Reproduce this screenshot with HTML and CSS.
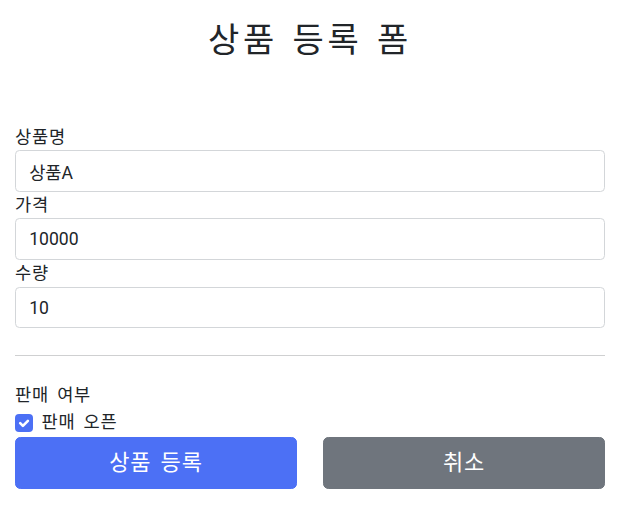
FILE: index.html
```html
<!DOCTYPE html>
<html lang="ko">
<head>
<meta charset="utf-8">
<title>상품 등록 폼</title>
<link rel="stylesheet" href="styles.css">
</head>
<body>
<div class="container">
  <div class="header">
    <h2 class="title">상품 등록 폼</h2>
  </div>
  <form class="form" onsubmit="return false">
    <div class="field">
      <label class="label ko" for="itemName">상품명</label>
      <input class="control" id="itemName" type="text" value="상품A">
    </div>
    <div class="field">
      <label class="label ko" for="price">가격</label>
      <input class="control" id="price" type="text" value="10000">
    </div>
    <div class="field">
      <label class="label ko" for="quantity">수량</label>
      <input class="control" id="quantity" type="text" value="10">
    </div>
    <hr class="divider">
    <div class="group-title ko">판매 여부</div>
    <div class="check">
      <span class="check-box">
        <svg width="18" height="18" viewBox="0 0 18 18"><rect x="0" y="0" width="18" height="18" rx="4" fill="#4c70f5"/><path d="M5.2 9.2l2.7 2.7 5-5" fill="none" stroke="#fff" stroke-width="2.6" stroke-linecap="round" stroke-linejoin="round"/></svg>
      </span>
      <label class="check-label ko">판매 오픈</label>
    </div>
    <div class="actions">
      <button class="btn btn-primary ko" type="submit">상품 등록</button>
      <button class="btn btn-secondary ko" type="button">취소</button>
    </div>
  </form>
</div>
</body>
</html>
```
FILE: styles.css
```css
html, body {
  margin: 0;
  padding: 0;
  background: #fff;
}
body {
  font-family: Roboto, "Noto Sans CJK KR", sans-serif;
  font-size: 17.6px;
  line-height: 1.5;
  color: #212529;
}
.ko {
  letter-spacing: 0.8px;
  word-spacing: 3px;
}
.container {
  width: 590px;
  padding: 0 15px;
}
.header {
  padding-top: 20px;
  padding-bottom: 63px;
  text-align: center;
}
.title {
  margin: 0;
  font-size: 34px;
  font-weight: 400;
  line-height: 1.2;
  letter-spacing: 3.5px;
  word-spacing: 3px;
}
.form {
  margin: 0;
}
.field {
  display: flex;
  flex-direction: column;
}
.label {
  display: block;
  line-height: 26.4px;
}
.control {
  display: block;
  box-sizing: border-box;
  width: 100%;
  height: 41.8px;
  margin: 0;
  padding: 6.6px 13.2px;
  font: inherit;
  line-height: 26.4px;
  color: #212529;
  background: #fff;
  border: 1px solid #d3d6d9;
  border-radius: 4.4px;
  outline: none;
}
.divider {
  margin: 26.4px 0;
  border: 0;
  border-top: 1px solid #cfd0d1;
  height: 0;
}
.group-title {
  line-height: 26.4px;
}
.check {
  display: flex;
  align-items: flex-start;
  min-height: 26.4px;
  margin-bottom: 1.6px;
}
.check-box {
  display: block;
  width: 18px;
  height: 18px;
  margin-top: 5px;
  margin-right: 8.4px;
}
.check-box svg {
  display: block;
}
.check-label {
  line-height: 26.4px;
}
.actions {
  display: grid;
  grid-template-columns: 1fr 1fr;
  column-gap: 26px;
}
.btn {
  display: block;
  box-sizing: border-box;
  width: 100%;
  height: 52.8px;
  padding: 8.8px 17.6px;
  font-family: inherit;
  font-size: 22px;
  line-height: 33px;
  color: #fff;
  border: 1px solid transparent;
  border-radius: 5.3px;
  text-align: center;
  cursor: pointer;
}
.btn-primary {
  background: #4c70f5;
  border-color: #4c70f5;
}
.btn-secondary {
  background: #6f757d;
  border-color: #6f757d;
}
```
